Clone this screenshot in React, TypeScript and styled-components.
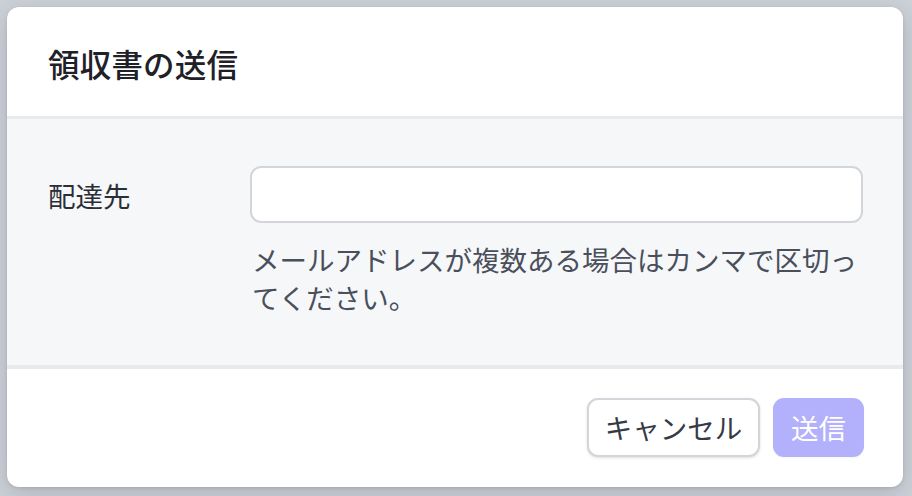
import React from "react";
import styled, { createGlobalStyle } from "styled-components";

const GlobalStyle = createGlobalStyle`
  html, body {
    margin: 0;
    padding: 0;
    background: #cdd1d8;
  }
  body {
    font-family: "Noto Sans CJK JP", "Noto Sans", sans-serif;
  }
  * { box-sizing: border-box; }
`;

const Backdrop = styled.div`
  width: 912px;
  height: 496px;
  padding: 7px 9px 9px 7px;
  background: #cdd1d8;
  overflow: hidden;
`;

const Modal = styled.div`
  width: 896px;
  height: 480px;
  background: #ffffff;
  border-radius: 12px;
  box-shadow: 0 6px 24px rgba(30, 35, 50, 0.18), 0 1px 3px rgba(30, 35, 50, 0.12);
  display: flex;
  flex-direction: column;
  overflow: hidden;
`;

const Header = styled.div`
  height: 112px;
  display: flex;
  align-items: center;
  padding: 0 41px;
  border-bottom: 3px solid #e8eaee;
  flex-shrink: 0;
`;

const Title = styled.h2`
  margin: 0;
  font-size: 31.5px;
  font-weight: 500;
  color: #1f2128;
  letter-spacing: 0.2px;
  padding-top: 2px;
`;

const Body = styled.div`
  flex: 1;
  background: #f6f7f9;
  border-bottom: 4px solid #e8eaee;
  padding: 47px 40px 0 41px;
  display: grid;
  grid-template-columns: 202px 1fr;
  align-content: start;
`;

const Label = styled.div`
  font-size: 27.5px;
  color: #2b2e36;
  height: 57px;
  display: flex;
  align-items: center;
`;

const Field = styled.div`
  display: flex;
  flex-direction: column;
`;

const Input = styled.input`
  height: 57px;
  width: 100%;
  border: 2px solid #d3d5da;
  border-radius: 11px;
  background: #ffffff;
  outline: none;
  font-family: inherit;
  font-size: 24px;
  padding: 0 16px;
`;

const Help = styled.p`
  margin: 17px 0 0 2px;
  font-size: 27.5px;
  line-height: 38px;
  color: #4a4f5c;
`;

const Footer = styled.div`
  height: 118px;
  flex-shrink: 0;
  display: flex;
  align-items: center;
  justify-content: flex-end;
  gap: 13px;
  padding: 0 39px 2px 0;
`;

const Button = styled.button<{ $primary?: boolean }>`
  height: 59px;
  padding: 0 ${(p) => (p.$primary ? "18px" : "15px")};
  border-radius: 11px;
  font-family: inherit;
  font-size: 27.5px;
  cursor: pointer;
  border: ${(p) => (p.$primary ? "none" : "2px solid #d3d5da")};
  background: ${(p) => (p.$primary ? "#b3b0fc" : "#ffffff")};
  color: ${(p) => (p.$primary ? "#ffffff" : "#363a46")};
  box-shadow: ${(p) => (p.$primary ? "0 1px 2px rgba(0,0,0,0.04)" : "0 1px 3px rgba(0,0,0,0.12)")};
  min-width: ${(p) => (p.$primary ? "91px" : "173px")};
`;

export default function App() {
  return (
    <>
      <GlobalStyle />
      <Backdrop>
        <Modal>
          <Header>
            <Title>領収書の送信</Title>
          </Header>
          <Body>
            <Label>配達先</Label>
            <Field>
              <Input type="text" />
              <Help>メールアドレスが複数ある場合はカンマで区切ってください。</Help>
            </Field>
          </Body>
          <Footer>
            <Button>キャンセル</Button>
            <Button $primary>送信</Button>
          </Footer>
        </Modal>
      </Backdrop>
    </>
  );
}
